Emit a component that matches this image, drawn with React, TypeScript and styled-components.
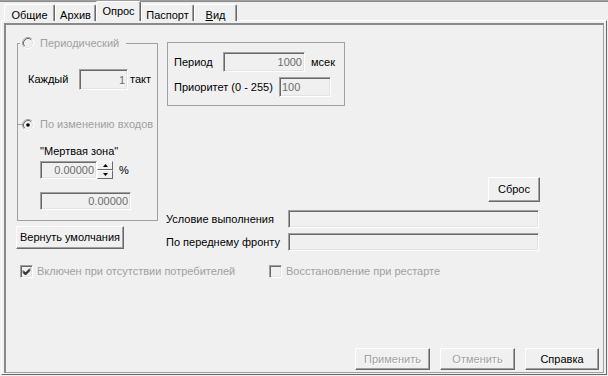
import React from "react"
import styled, { createGlobalStyle } from "styled-components"

const GlobalStyle = createGlobalStyle`
  html, body {
    margin: 0;
    padding: 0;
    background: #f0f0f0;
  }
  body {
    font-family: "Liberation Sans", Arial, sans-serif;
    font-size: 11px;
    line-height: 13px;
    color: #000;
  }
`

const DISABLED = "#a0a0a0"

type TabProps = { $w: number; $active?: boolean }
type SizeProps = { $w: number; $h: number; $align?: "left" | "right" }

function Radio({ checked }: { checked?: boolean }) {
  return (
    <svg width="12" height="12" viewBox="0 0 12 12">
      <circle cx="6" cy="6" r="4.5" fill="#f0f0f0" />
      <path d="M2.11 9.89 A5.5 5.5 0 0 1 9.89 2.11" fill="none" stroke="#a0a0a0" />
      <path d="M9.89 2.11 A5.5 5.5 0 0 1 2.11 9.89" fill="none" stroke="#ffffff" />
      <path d="M2.82 9.18 A4.5 4.5 0 0 1 9.18 2.82" fill="none" stroke="#696969" />
      <path d="M9.18 2.82 A4.5 4.5 0 0 1 2.82 9.18" fill="none" stroke="#e3e3e3" />
      {checked && <circle cx="6" cy="6" r="1.8" fill="#000" />}
    </svg>
  )
}

function Check({ checked }: { checked?: boolean }) {
  return (
    <S.CheckBox>
      {checked && (
        <svg width="9" height="9" viewBox="0 0 9 9">
          <path d="M1 3.5 L3.5 6 L8 1.5 M1 4.5 L3.5 7 L8 2.5 M1 5.5 L3.5 8 L8 3.5" fill="none" stroke="#000" strokeWidth="1" />
        </svg>
      )}
    </S.CheckBox>
  )
}

function Spin() {
  return (
    <S.Spin>
      <S.SpinButton>
        <svg width="5" height="3" viewBox="0 0 5 3">
          <path d="M2.5 0 L5 3 L0 3 Z" fill="#000" />
        </svg>
      </S.SpinButton>
      <S.SpinButton>
        <svg width="5" height="3" viewBox="0 0 5 3">
          <path d="M0 0 L5 0 L2.5 3 Z" fill="#000" />
        </svg>
      </S.SpinButton>
    </S.Spin>
  )
}

export default function App() {
  return (
    <S.Window>
      <GlobalStyle />
      <S.TabStrip>
        <S.Tab $w={51}>Общие</S.Tab>
        <S.Tab $w={41}>Архив</S.Tab>
        <S.Tab $w={45} $active>Опрос</S.Tab>
        <S.Tab $w={53}>Паспорт</S.Tab>
        <S.Tab $w={43}>
          <u>В</u>ид
        </S.Tab>
      </S.TabStrip>
      <S.Panel>
        <S.Page>
          <S.TopSection>
            <S.LeftCol>
              <S.Group>
                <S.Legend>
                  <Radio />
                  <S.Disabled>Периодический</S.Disabled>
                </S.Legend>
                <S.Row $top={19} $left={8}>
                  <S.Label $w={51}>Каждый</S.Label>
                  <S.Field $w={49} $h={21} $align="right" readOnly defaultValue="1" />
                  <S.Unit>такт</S.Unit>
                </S.Row>
                <S.SubCaption>
                  <S.Tick />
                  <Radio checked />
                  <S.Disabled>По изменению входов</S.Disabled>
                </S.SubCaption>
                <S.Row $top={14} $left={20}>
                  <span>"Мертвая зона"</span>
                </S.Row>
                <S.Row $top={3} $left={20}>
                  <S.Field $w={57} $h={18} $align="right" readOnly defaultValue="0.00000" />
                  <Spin />
                  <S.Unit $gap={6}>%</S.Unit>
                </S.Row>
                <S.Row $top={13} $left={20}>
                  <S.Field $w={91} $h={18} $align="right" readOnly defaultValue="0.00000" />
                </S.Row>
              </S.Group>
              <S.Button $w={108} $h={23} $top={5} $left={-1}>
                Вернуть умолчания
              </S.Button>
            </S.LeftCol>

            <S.RightCol>
              <S.PlainGroup>
                <S.Row>
                  <S.Label $w={49}>Период</S.Label>
                  <S.Field $w={82} $h={20} $align="right" readOnly defaultValue="1000" />
                  <S.Unit $gap={6}>мсек</S.Unit>
                </S.Row>
                <S.Row $top={5}>
                  <S.Label $w={105}>Приоритет (0 - 255)</S.Label>
                  <S.Field $w={52} $h={20} readOnly defaultValue="100" />
                </S.Row>
              </S.PlainGroup>
              <S.ResetRow>
                <S.Button $w={52} $h={25}>
                  Сброс
                </S.Button>
              </S.ResetRow>
              <S.Row $top={8} $left={-1}>
                <S.Label $w={122}>Условие выполнения</S.Label>
                <S.Field $w={251} $h={18} readOnly defaultValue="" />
              </S.Row>
              <S.Row $top={5} $left={-1}>
                <S.Label $w={122}>По переднему фронту</S.Label>
                <S.Field $w={251} $h={18} readOnly defaultValue="" />
              </S.Row>
            </S.RightCol>
          </S.TopSection>

          <S.CheckRow>
            <S.CheckItem $w={249}>
              <Check checked />
              <S.Disabled>Включен при отсутствии потребителей</S.Disabled>
            </S.CheckItem>
            <S.CheckItem>
              <Check />
              <S.Disabled>Восстановление при рестарте</S.Disabled>
            </S.CheckItem>
          </S.CheckRow>

          <S.ButtonRow>
            <S.Button $w={75} $h={22} disabled>
              Применить
            </S.Button>
            <S.Button $w={75} $h={22} disabled>
              Отменить
            </S.Button>
            <S.Button $w={74} $h={22}>
              Справка
            </S.Button>
          </S.ButtonRow>
        </S.Page>
      </S.Panel>
    </S.Window>
  )
}

const S = {
  Window: styled.div`
    width: 608px;
    height: 376px;
    box-sizing: border-box;
    display: flex;
    flex-direction: column;
    background: #f0f0f0;
    border-top: 1px solid #a0a0a0;
    box-shadow: inset 0 1px 0 #8a8a8a;
    overflow: hidden;
  `,
  TabStrip: styled.div`
    display: flex;
    align-items: flex-end;
    height: 20px;
    padding-left: 4px;
    margin-bottom: -1px;
    position: relative;
    z-index: 1;
  `,
  Tab: styled.div<TabProps>`
    box-sizing: border-box;
    width: ${(p) => p.$w}px;
    height: ${(p) => (p.$active ? 20 : 17)}px;
    padding-top: ${(p) => (p.$active ? 3 : 4)}px;
    text-align: center;
    background: #f0f0f0;
    border-top: 1px solid #fff;
    border-left: 1px solid #fff;
    border-right: 1px solid #696969;
    box-shadow: inset -1px 0 0 #a0a0a0;
    border-radius: 2px 2px 0 0;
    u {
      text-decoration: underline;
    }
  `,
  Panel: styled.div`
    flex: 1;
    display: flex;
    margin: 0 1px 1px 1px;
    padding: 2px 2px 1px 2px;
    border-top: 1px solid #fff;
    border-left: 1px solid #fff;
    border-right: 1px solid #696969;
    border-bottom: 1px solid #696969;
  `,
  Page: styled.div`
    flex: 1;
    display: flex;
    flex-direction: column;
    border-top: 2px solid #8a8a8a;
    border-left: 2px solid #8a8a8a;
    border-right: 1px solid #a0a0a0;
    border-bottom: 1px solid #a0a0a0;
  `,
  TopSection: styled.div`
    display: flex;
    align-items: flex-start;
    margin-top: 11px;
    padding-left: 11px;
  `,
  LeftCol: styled.div`
    display: flex;
    flex-direction: column;
    width: 141px;
  `,
  RightCol: styled.div`
    display: flex;
    flex-direction: column;
    width: 373px;
    margin-left: 9px;
  `,
  Group: styled.fieldset`
    box-sizing: border-box;
    height: 185px;
    min-width: 0;
    margin: 0;
    padding: 0 0 0 2px;
    border: 1px solid #a0a0a0;
  `,
  Legend: styled.legend`
    display: flex;
    align-items: center;
    gap: 6px;
    height: 14px;
    padding: 0 7px 0 2px;
  `,
  PlainGroup: styled.div`
    box-sizing: border-box;
    width: 178px;
    height: 64px;
    margin-top: 6px;
    padding: 9px 0 0 6px;
    border: 1px solid #a0a0a0;
  `,
  SubCaption: styled.div`
    display: flex;
    align-items: center;
    gap: 0;
    height: 13px;
    margin: 28px 0 0 -3px;
    svg {
      margin-right: 6px;
    }
  `,
  Tick: styled.span`
    width: 5px;
    height: 1px;
    background: #a0a0a0;
  `,
  Row: styled.div<{ $top?: number; $left?: number }>`
    display: flex;
    align-items: center;
    margin-top: ${(p) => p.$top ?? 0}px;
    margin-left: ${(p) => p.$left ?? 0}px;
  `,
  Label: styled.span<{ $w: number }>`
    width: ${(p) => p.$w}px;
    flex: none;
    white-space: nowrap;
  `,
  Unit: styled.span<{ $gap?: number }>`
    margin-left: ${(p) => p.$gap ?? 2}px;
  `,
  Disabled: styled.span`
    color: ${DISABLED};
    white-space: nowrap;
  `,
  Field: styled.input<SizeProps>`
    box-sizing: border-box;
    width: ${(p) => p.$w}px;
    height: ${(p) => p.$h}px;
    margin: 0;
    padding: 0 2px;
    font: inherit;
    color: #6d6d6d;
    text-align: ${(p) => p.$align ?? "left"};
    background: #f0f0f0;
    border: 1px solid;
    border-color: #a0a0a0 #fff #fff #a0a0a0;
    box-shadow: inset 1px 1px 0 #696969, inset -1px -1px 0 #e3e3e3;
    outline: none;
  `,
  Spin: styled.div`
    display: flex;
    flex-direction: column;
    width: 16px;
    height: 18px;
  `,
  SpinButton: styled.div`
    box-sizing: border-box;
    flex: 1;
    display: flex;
    align-items: center;
    justify-content: center;
    background: #f0f0f0;
    border: 1px solid;
    border-color: #fff #696969 #696969 #fff;
  `,
  Button: styled.button<{ $w: number; $h: number; $top?: number; $left?: number }>`
    box-sizing: border-box;
    width: ${(p) => p.$w}px;
    height: ${(p) => p.$h}px;
    margin: ${(p) => p.$top ?? 0}px 0 0 ${(p) => p.$left ?? 0}px;
    padding: 0;
    font: inherit;
    color: #000;
    background: #f0f0f0;
    border: 1px solid;
    border-color: #fff #696969 #696969 #fff;
    box-shadow: inset -1px -1px 0 #a0a0a0;
    border-radius: 0;
    &:disabled {
      color: ${DISABLED};
      text-shadow: 1px 1px 0 #fff;
    }
  `,
  ResetRow: styled.div`
    display: flex;
    justify-content: flex-end;
    margin-top: 71px;
  `,
  CheckRow: styled.div`
    display: flex;
    align-items: center;
    height: 13px;
    margin: 14px 0 0 14px;
  `,
  CheckItem: styled.label<{ $w?: number }>`
    display: flex;
    align-items: center;
    gap: 4px;
    width: ${(p) => (p.$w ? `${p.$w}px` : "auto")};
  `,
  CheckBox: styled.span`
    box-sizing: border-box;
    width: 13px;
    height: 13px;
    display: flex;
    align-items: center;
    justify-content: center;
    background: #f0f0f0;
    border: 1px solid;
    border-color: #a0a0a0 #fff #fff #a0a0a0;
    box-shadow: inset 1px 1px 0 #696969, inset -1px -1px 0 #e3e3e3;
  `,
  ButtonRow: styled.div`
    display: flex;
    justify-content: flex-end;
    gap: 10px;
    margin-top: auto;
    padding: 0 4px 2px 0;
  `,
}
